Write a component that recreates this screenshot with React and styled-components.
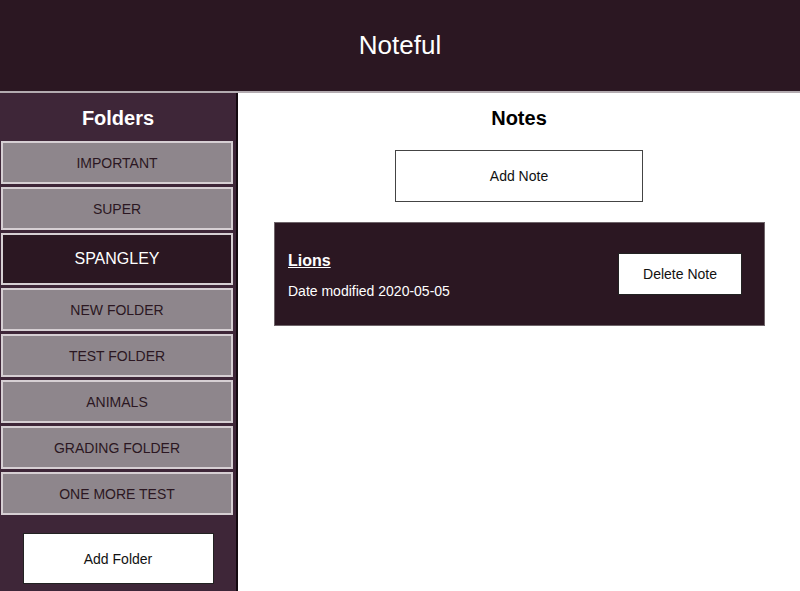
import React from 'react';
import styled, { createGlobalStyle } from 'styled-components';

const GlobalStyle = createGlobalStyle`
  body {
    margin: 0;
    font-family: "Liberation Sans", Arial, sans-serif;
    background: #fff;
  }
`;

const Header = styled.header`
  height: 91px;
  background-color: #2b1722;
  border-bottom: 2px solid #b3abb0;
  display: flex;
  align-items: center;
  justify-content: center;
`;

const Title = styled.h1`
  margin: 0;
  color: #fff;
  font-size: 26px;
  font-weight: normal;
`;

const Layout = styled.div`
  display: flex;
  min-height: 498px;
`;

const Sidebar = styled.nav`
  width: 236px;
  background-color: #3e2638;
  border-right: 2px solid #140a10;
  display: flex;
  flex-direction: column;
  padding-bottom: 8px;
`;

const SectionTitle = styled.h2`
  margin: 13px 0 11px;
  font-size: 20px;
  line-height: 24px;
  text-align: center;
  color: ${(p) => (p.light ? '#fff' : '#000')};
`;

const FolderList = styled.ul`
  list-style: none;
  margin: 0 3px 0 1px;
  padding: 0;
  display: flex;
  flex-direction: column;
  gap: 3px;
`;

const FolderItem = styled.li`
  height: ${(p) => (p.active ? '48px' : '39px')};
  border: 2px solid #d6cfd3;
  background-color: ${(p) => (p.active ? '#2b1722' : '#8e868c')};
  color: ${(p) => (p.active ? '#fff' : '#2b1722')};
  font-size: ${(p) => (p.active ? '16px' : '14px')};
  display: flex;
  align-items: center;
  justify-content: center;
  text-transform: uppercase;
  cursor: pointer;
`;

const WhiteButton = styled.button`
  background: #fff;
  border: 1px solid ${(p) => p.edge || '#222'};
  font-family: inherit;
  font-size: 14px;
  color: #111;
  cursor: pointer;
  width: ${(p) => p.w};
  height: ${(p) => p.h};
  margin-top: ${(p) => p.top || '0'};
  flex-shrink: 0;
`;

const FolderActions = styled.div`
  display: flex;
  justify-content: center;
  margin-top: 18px;
`;

const Main = styled.main`
  flex: 1;
  display: flex;
  flex-direction: column;
  align-items: center;
`;

const NoteList = styled.ul`
  list-style: none;
  margin: 20px 0 0;
  align-self: stretch;
  padding: 0 35px 0 36px;
`;

const NoteCard = styled.li`
  height: 102px;
  background-color: #2b1722;
  border: 1px solid #6e6469;
  display: flex;
  align-items: center;
  justify-content: space-between;
  padding: 0 22px 0 13px;
`;

const NoteInfo = styled.div`
  display: flex;
  flex-direction: column;
  gap: 13px;
  color: #fff;
  margin-top: 2px;
`;

const NoteTitle = styled.a`
  color: #fff;
  font-weight: bold;
  font-size: 16px;
  text-decoration: underline;
`;

const NoteDate = styled.span`
  font-size: 14px;
`;

const folders = [
  'Important',
  'Super',
  'Spangley',
  'New Folder',
  'Test Folder',
  'Animals',
  'Grading Folder',
  'One More Test',
];

export default function App() {
  return (
    <>
      <GlobalStyle />
      <Header>
        <Title>Noteful</Title>
      </Header>
      <Layout>
        <Sidebar>
          <SectionTitle light>Folders</SectionTitle>
          <FolderList>
            {folders.map((f) => (
              <FolderItem key={f} active={f === 'Spangley'}>
                {f}
              </FolderItem>
            ))}
          </FolderList>
          <FolderActions>
            <WhiteButton w="191px" h="51px">Add Folder</WhiteButton>
          </FolderActions>
        </Sidebar>
        <Main>
          <SectionTitle>Notes</SectionTitle>
          <WhiteButton w="248px" h="52px" edge="#444" top="9px">Add Note</WhiteButton>
          <NoteList>
            <NoteCard>
              <NoteInfo>
                <NoteTitle href="#">Lions</NoteTitle>
                <NoteDate>Date modified 2020-05-05</NoteDate>
              </NoteInfo>
              <WhiteButton w="124px" h="42px">Delete Note</WhiteButton>
            </NoteCard>
          </NoteList>
        </Main>
      </Layout>
    </>
  );
}
